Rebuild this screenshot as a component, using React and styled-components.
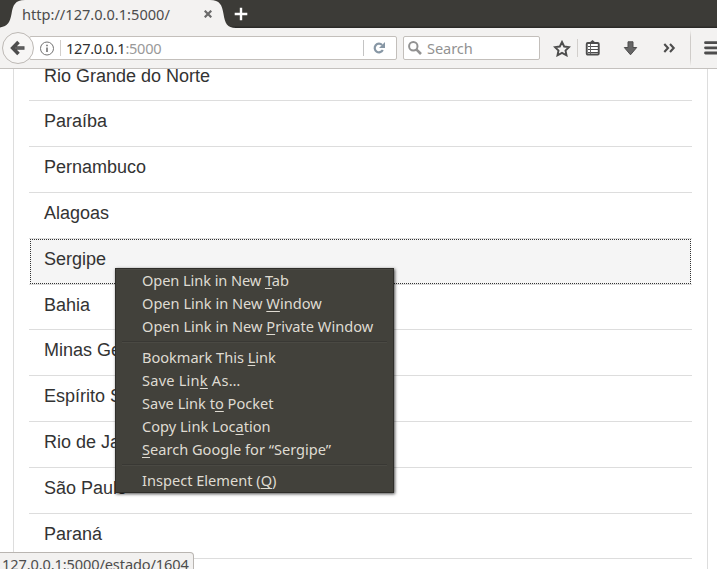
import React from 'react';
import styled, { createGlobalStyle } from 'styled-components';

const GlobalStyle = createGlobalStyle`
  * { box-sizing: border-box; }
  body { margin: 0; background: #fff; }
`;

const Browser = styled.div`
  position: relative;
  display: flex;
  flex-direction: column;
  width: 717px;
  height: 569px;
  overflow: hidden;
  background: #fff;
  font-family: 'Noto Sans', 'Open Sans', sans-serif;
  font-size: 14.6px;
  white-space: pre;
`;

const TabStrip = styled.header`
  display: flex;
  flex: none;
  height: 28px;
  background: linear-gradient(#3c3b37 0 26px, #34332f 26px 27px, #2b2a28 27px);
`;

const Tab = styled.div`
  position: relative;
  display: flex;
  align-items: center;
  width: 234px;
  padding-left: 22px;
  color: #4c4c4c;
`;

const TabShape = styled.svg`
  position: absolute;
  left: 0;
  top: 0;
`;

const TabTitle = styled.span`
  position: relative;
  width: 182px;
  line-height: 20px;
  margin-top: -1px;
`;

const Icon = styled.svg`
  position: relative;
  display: block;
  flex: none;
`;

const NewTab = styled.div`
  display: flex;
  padding-top: 7px;
`;

const Toolbar = styled.nav`
  display: flex;
  align-items: center;
  flex: none;
  height: 41px;
  background: #f3f2f1;
  border-bottom: 1px solid #c4c1be;
`;

const BackButton = styled.div`
  position: relative;
  z-index: 1;
  display: grid;
  place-items: center;
  flex: none;
  width: 32px;
  height: 32px;
  margin-left: 2px;
  background: #f7f6f5;
  border: 1px solid #bdb9b5;
  border-radius: 50%;
`;

const Field = styled.div`
  display: flex;
  align-items: center;
  flex: none;
  width: ${(p) => p.$width}px;
  height: 24px;
  margin-left: ${(p) => p.$gap}px;
  padding-left: ${(p) => p.$pad}px;
  background: #fff;
  border: 1px solid #c3bfbb;
  border-radius: 2px;
`;

const FieldDivider = styled.i`
  width: 1px;
  height: 16px;
  background: #c4c4c4;
`;

const Address = styled.span`
  flex: 1;
  padding-left: 6px;
  color: #999;
  letter-spacing: -0.27px;
  line-height: 20px;

  b {
    color: #303030;
    font-weight: 400;
  }
`;

const Placeholder = styled.span`
  padding-left: 5px;
  color: #929292;
  letter-spacing: -0.1px;
`;

const Actions = styled.div`
  display: flex;
  align-items: center;
  padding-left: 13px;
`;

const ActionDivider = styled.i`
  width: 1px;
  height: ${(p) => p.$height}px;
  margin: 0 ${(p) => p.$after}px 0 ${(p) => p.$before}px;
  background: ${(p) => (p.$fade ? 'linear-gradient(transparent, #cfccc9 20% 80%, transparent)' : '#d2cfcc')};
`;

const ActionIcon = styled(Icon)`
  margin-right: ${(p) => p.$after || 0}px;
`;

const Viewport = styled.main`
  flex: 1;
  min-height: 0;
  overflow: hidden;
  padding: 0 9px 0 13px;
`;

const Panel = styled.section`
  display: flow-root;
  height: 100%;
  padding: 0 15px;
  border: solid #ddd;
  border-width: 0 1px;
`;

const List = styled.ul`
  margin: -13.4px 0 0;
  padding: 0;
  list-style: none;
`;

const StateRow = styled.li`
  height: 45.8px;
  padding: ${(p) => (p.$active ? '0 1px' : '9.95px 15px 0')};
  border-bottom: 1px solid #ddd;
  color: #333;
  font: 18px/20px 'Liberation Sans', Arial, sans-serif;
`;

const FocusedLink = styled.div`
  height: 100%;
  padding: 8.95px 13px 0;
  background: #f5f5f5;
  border: 1px dotted #333;
`;

const Menu = styled.div`
  position: absolute;
  left: 115px;
  top: 268px;
  width: 279px;
  height: 225px;
  background: #42413b;
  border: 1px solid #2f2e2a;
  box-shadow: inset 0 1px #4a4943, 1px 1px 3px rgba(0, 0, 0, 0.7);
  color: #dfdbd2;
`;

const MenuItem = styled.div`
  height: 23px;
  padding-left: 26px;
  line-height: 23px;
  letter-spacing: ${(p) => p.$spacing || 0}px;
`;

const AccessKey = styled.span`
  text-decoration: underline;
  text-decoration-thickness: 1px;
  text-underline-offset: 2px;
  text-decoration-skip-ink: none;
`;

const Separator = styled.hr`
  height: 2px;
  margin: 3px 6px;
  border: 0;
  background: linear-gradient(#393834 50%, #4a4943 50%);
`;

const Status = styled.footer`
  position: absolute;
  left: 0;
  top: 552px;
  width: 194px;
  height: 24px;
  padding-left: 2px;
  background: #f2f1f0;
  border: 1px solid #b9b5b1;
  border-left: 0;
  border-top-right-radius: 4px;
  color: #4c4c4c;
  line-height: 22px;
  letter-spacing: -0.12px;
`;

const STATES = [
  'Rio Grande do Norte', 'Paraíba', 'Pernambuco', 'Alagoas', 'Sergipe', 'Bahia',
  'Minas Gerais', 'Espírito Santo', 'Rio de Janeiro', 'São Paulo', 'Paraná',
];

const MENU = [
  ['Open Link in New ', 'T', 'ab', -0.08],
  ['Open Link in New ', 'W', 'indow'],
  ['Open Link in New ', 'P', 'rivate Window'],
  null,
  ['Bookmark This ', 'L', 'ink', -0.03],
  ['Save Lin', 'k', ' As…', 0.22],
  ['Save Link t', 'o', ' Pocket'],
  ['Copy Link Loc', 'a', 'tion'],
  ['', 'S', 'earch Google for “Sergipe”'],
  null,
  ['Inspect Element (', 'Q', ')'],
];

export default function App() {
  return (
    <Browser>
      <GlobalStyle />
      <TabStrip>
        <Tab>
          <TabShape width="236" height="28">
            <path d="M0 28V27.5C8 26 10 22 11.500 14C13 5 15 0 25 0H210C220 0 222 5 223.500 14C225 23 227 28 236 28Z" fill="#f3f2f1" />
          </TabShape>
          <TabTitle>http://127.0.0.1:5000/</TabTitle>
          <Icon width="8" height="8" stroke="#6a6a6a" strokeWidth="2.200">
            <path d="M.7 .7L7.300 7.300M7.300 .7L.7 7.300" />
          </Icon>
        </Tab>
        <NewTab>
          <Icon width="14" height="14" stroke="#fff" strokeWidth="2.400">
            <path d="M7 .7V13.300M.7 7H13.300" />
          </Icon>
        </NewTab>
      </TabStrip>

      <Toolbar>
        <BackButton>
          <Icon width="16" height="16" viewBox="0 0 16 16" fill="none" stroke="#4d4d4d">
            <path d="M8.500 2L2.700 8L8.500 14M3.500 8H14.500" strokeWidth="3.600" />
            <path d="M5 8H13.500" stroke="#666" strokeWidth="1.500" />
          </Icon>
        </BackButton>
        <Field $width={368} $gap={-5} $pad={10}>
          <Icon width="15" height="15" fill="none" stroke="#737373">
            <circle cx="7" cy="7.500" r="6.500" />
            <path d="M7 6.500V11M7 3.700V5.300" strokeWidth="1.600" />
          </Icon>
          <ActionDivider $height={16} $before={5} $after={-1} />
          <Address><b>127.0.0.1</b>:5000</Address>
          <FieldDivider />
          <Icon width="32" height="14" viewBox="0 0 32 14">
            <path d="M18.800 9A4.300 4.300 0 1 1 18.100 4" fill="none" stroke="#8797a5" strokeWidth="2.200" />
            <path d="M21 1V7H15Z" fill="#8797a5" />
          </Icon>
        </Field>
        <Field $width={137} $gap={6} $pad={4}>
          <Icon width="14" height="14" fill="none" stroke="#929292">
            <circle cx="5.300" cy="5.300" r="4.200" strokeWidth="2" />
            <path d="M8.300 8.300L13 13" strokeWidth="2.600" />
          </Icon>
          <Placeholder>Search</Placeholder>
        </Field>
        <Actions>
          <Icon width="18" height="17" fill="none" stroke="#4d4d4d" strokeWidth="1.900">
            <path d="M9 2L11.200 6.500L16 7.100L12.500 10.500L13.500 15.300L9 12.900L4.500 15.300L5.500 10.500L2 7.100L6.800 6.500Z" />
          </Icon>
          <ActionDivider $height={18} $before={6} $after={7} />
          <ActionIcon $after={23} width="15" height="16" fill="none" stroke="#4d4d4d">
            <path d="M4 3L7.500 0L11 3Z" fill="#4d4d4d" stroke="none" />
            <rect x="1.750" y="3" width="12" height="11.500" rx="1" fill="#fff" strokeWidth="1.900" />
            <path d="M3 6.500H13M3 9.500H13M3 12.500H13" strokeWidth="1" />
            <path d="M5.500 4V14" stroke="#666" strokeWidth="1" />
          </ActionIcon>
          <ActionIcon $after={25} width="15" height="15" fill="#666" stroke="#4d4d4d">
            <path d="M5 .8H10V6.500H13.700L7.500 13.800L1.300 6.500H5Z" />
          </ActionIcon>
          <ActionIcon $after={14} width="13" height="10" fill="none" stroke="#4d4d4d" strokeWidth="2.100">
            <path d="M1.300 1L5 5L1.300 9M7 1L10.700 5L7 9" />
          </ActionIcon>
          <ActionDivider $height={36} $before={0} $after={13} $fade />
          <Icon width="16" height="14" stroke="#4d4d4d" strokeWidth="2.800" strokeLinecap="round">
            <path d="M1.500 1.700H18M1.500 6.800H18M1.500 12H18" />
          </Icon>
        </Actions>
      </Toolbar>

      <Viewport>
        <Panel>
          <List>
            {STATES.map((name) => {
              const active = name === 'Sergipe';
              return (
                <StateRow key={name} $active={active}>
                  {active ? <FocusedLink>{name}</FocusedLink> : name}
                </StateRow>
              );
            })}
          </List>
        </Panel>
      </Viewport>

      <Menu>
        {MENU.map((item, i) =>
          item ? (
            <MenuItem key={i} $spacing={item[3]}>
              {item[0]}<AccessKey>{item[1]}</AccessKey>{item[2]}
            </MenuItem>
          ) : (
            <Separator key={i} />
          )
        )}
      </Menu>
      <Status>127.0.0.1:5000/estado/1604</Status>
    </Browser>
  );
}
